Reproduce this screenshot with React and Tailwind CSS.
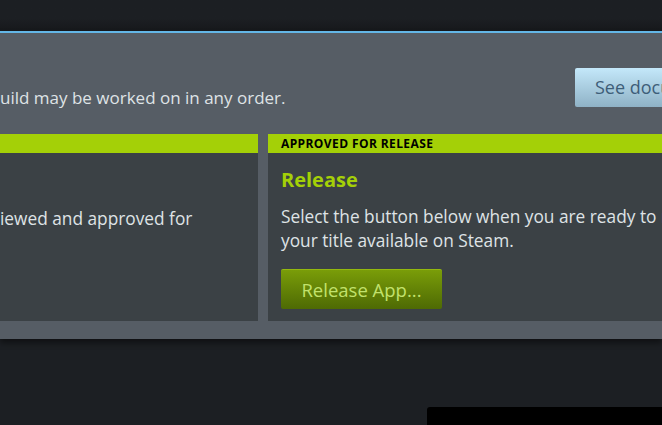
export default function App() {
  return (
    <div
      className="relative h-[425px] w-[662px] overflow-hidden bg-[#1c1f23]"
      style={{ fontFamily: '"Open Sans", "Noto Sans", Arial, sans-serif' }}
    >
      {/* top strip */}
      <div className="h-[31px] bg-gradient-to-b from-[#1c1f23] from-60% to-[#16181b]" />

      {/* release panel */}
      <div className="border-t-2 border-[#63b6e6] bg-[#565d65] pb-[18px] shadow-[0_4px_6px_rgba(0,0,0,0.45)]">
        <div className="flex items-end pt-[35px]">
          <p className="-mb-[3px] min-w-0 flex-1 text-[17px] leading-6 text-[#dfe3e6]">
            uild may be worked on in any order.
          </p>
          <div className="w-[87px] shrink-0">
            <button className="h-[39px] whitespace-nowrap rounded-[2px] bg-gradient-to-b from-[#c4e8fa] to-[#8fb2c6] px-5 text-[18px] text-[#3e5e79]">
              See documentation
            </button>
          </div>
        </div>

        <div className="mt-[27px] flex gap-[10px]">
          {/* left card (cut at the window edge) */}
          <div className="h-[187px] w-[258px] shrink-0 bg-[#3b4145]">
            <div className="h-[19px] bg-[#a4d007]" />
            <div className="pt-[54px] text-[17.3px] leading-6 text-[#dfe3e6]">
              iewed and approved for
            </div>
          </div>

          {/* right card */}
          <div className="h-[187px] w-[460px] shrink-0 bg-[#3b4145]">
            <div className="h-[19px] bg-[#a4d007] px-[13px] text-[12px] font-bold leading-[19px] tracking-[0.4px] text-black">
              APPROVED FOR RELEASE
            </div>
            <div className="px-[13px] pt-[14px]">
              <h2 className="text-[20px] font-bold leading-[26px] text-[#a4d007]">Release</h2>
              <p className="mt-[12px] w-[430px] text-[17.3px] leading-6 text-[#dfe3e6]">
                Select the button below when you are ready to make your title available on Steam.
              </p>
              <button className="mt-[16px] h-[40px] w-[161px] rounded-[2px] border-t border-[#94b80f] bg-gradient-to-b from-[#7a9d09] to-[#4e6a04] text-[18.5px] text-[#c2e26c]">
                Release App...
              </button>
            </div>
          </div>
        </div>
      </div>

      {/* bottom black box */}
      <div className="absolute left-[427px] top-[407px] h-[30px] w-[260px] rounded-tl-[3px] bg-black" />
    </div>
  );
}
